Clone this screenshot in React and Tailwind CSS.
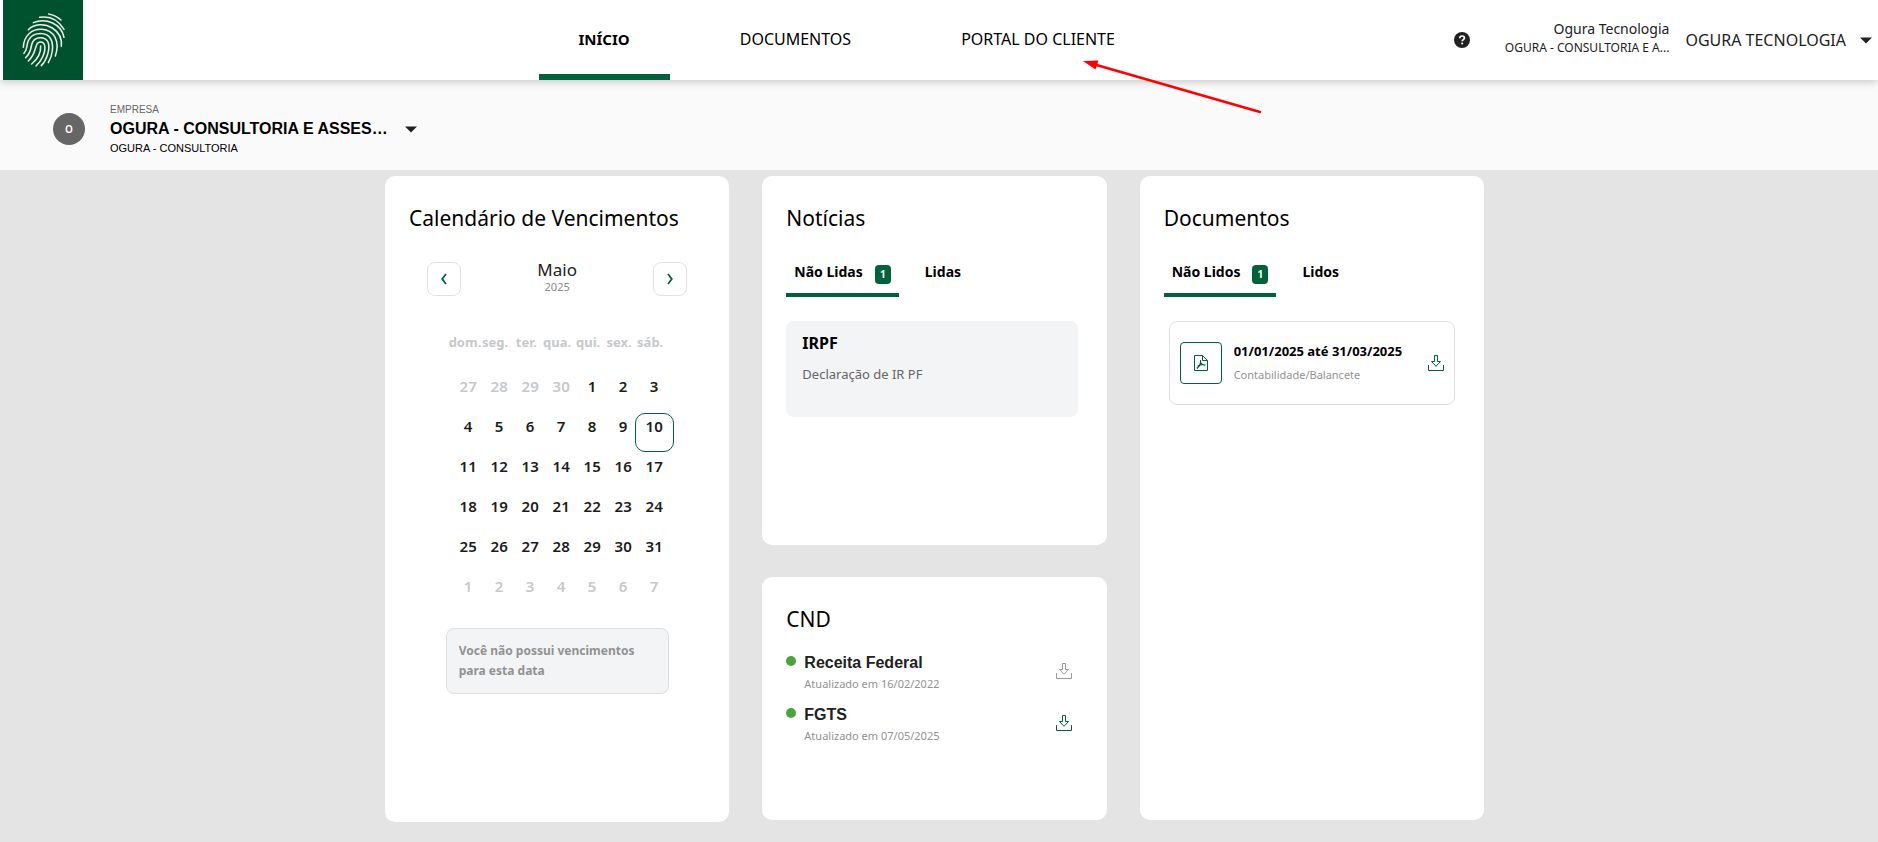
import React from "react";

const WEEKDAYS = ["dom.", "seg.", "ter.", "qua.", "qui.", "sex.", "sáb."];
const WEEKS = [
  [27, 28, 29, 30, 1, 2, 3],
  [4, 5, 6, 7, 8, 9, 10],
  [11, 12, 13, 14, 15, 16, 17],
  [18, 19, 20, 21, 22, 23, 24],
  [25, 26, 27, 28, 29, 30, 31],
  [1, 2, 3, 4, 5, 6, 7],
];

function isOutside(week, day) {
  return (week === 0 && day > 20) || (week === 5 && day < 20);
}

function Fingerprint() {
  return (
    <svg viewBox="9 0 240 240" className="size-20" fill="none" stroke="#e9f0ea" strokeWidth="4.6" strokeLinecap="round" aria-hidden="true">
      <path d="M146 42Q167 46 183 60" />
      <path d="M119 52C150 47 176 61 192 88" />
      <path d="M100 68C138 52 185 72 192 112" />
      <path d="M85 89C102 71 133 69 157 84C177 97 187 114 184 139" />
      <path d="M70 142C71 107 96 86 126 88C162 91 181 123 166 168" />
      <path d="M72 160C85 146 78 131 87 118C102 95 141 95 153 118C162 138 157 168 145 188" />
      <path d="M77 173C97 155 91 138 98 126C107 109 136 109 144 126C152 148 139 182 124 197" />
      <path d="M85 183C104 165 104 150 109 137C114 122 131 123 134 137C138 156 124 184 108 198" />
      <path d="M122 138C123 158 112 178 95 192" />
    </svg>
  );
}

function Caret() {
  return (
    <svg viewBox="0 0 12 7" className="h-[7px] w-3 shrink-0" fill="#212121" aria-hidden="true">
      <path d="M0 .5h12L6 6.5z" />
    </svg>
  );
}

function DownloadIcon() {
  return (
    <svg viewBox="0 0 16 16" className="size-4" fill="none" stroke="currentColor" aria-hidden="true">
      <path d="M6.5.5h3v6h3L8 11.3 3.5 6.5h3z" />
      <path d="M.5 10v5.5h15V10" />
    </svg>
  );
}

function PdfIcon() {
  return (
    <svg viewBox="0 0 14 16" className="h-4 w-[14px]" fill="none" stroke="currentColor" aria-hidden="true">
      <path d="M.5.5h8l5 5v10H.5z" />
      <path d="M8.5.5v5h5" />
      <path d="M6.500 5C7 8 6 11 2.800 13.500M3.500 11.200C5.500 9.800 8.500 9.300 11.500 10M6.600 7.500C7.500 9 9 10 11 10.300" strokeWidth="1.200" />
    </svg>
  );
}

function Chevron({ d }) {
  return (
    <svg viewBox="0 0 8 12" className="h-3 w-2" fill="none" stroke="#00623a" strokeWidth="1.8" aria-hidden="true">
      <path d={d} />
    </svg>
  );
}

function Card({ title, className = "", children }) {
  return (
    <section className={"rounded-[10px] bg-white px-6 pt-6 " + className}>
      <h2 className="text-[21px] leading-9 text-black">{title}</h2>
      {children}
    </section>
  );
}

function Tabs({ active, other }) {
  return (
    <div role="tablist" className="mt-6 flex h-[37px] gap-[18px] text-sm leading-6 font-bold text-black">
      <button role="tab" aria-selected="true" className="flex items-start gap-3 border-b-4 border-[#00623a] px-2">
        {active}
        <span className="mt-[5px] h-[19px] w-4 rounded bg-[#00623a] text-center text-[10px] leading-[19px] text-white">1</span>
      </button>
      <button role="tab" aria-selected="false" className="flex items-start px-2">
        {other}
      </button>
    </div>
  );
}

function Calendar() {
  return (
    <Card title="Calendário de Vencimentos" className="h-[646px]">
      <div className="mt-5 flex items-center justify-between px-[18px]">
        <button aria-label="Mês anterior" className="mt-[6px] flex size-[34px] items-center justify-center rounded-lg border border-[#e2e2e2]">
          <Chevron d="M6 1 2.200 6 6 11" />
        </button>
        <div className="text-center">
          <p className="text-[17px] leading-[22px] text-[#212121]">Maio</p>
          <p className="text-[11px] leading-3 text-[#8a8a8a]">2025</p>
        </div>
        <button aria-label="Próximo mês" className="mt-[6px] flex size-[34px] items-center justify-center rounded-lg border border-[#e2e2e2]">
          <Chevron d="M2 1 5.800 6 2 11" />
        </button>
      </div>
      <table className="mx-auto mt-7 w-[217px] table-fixed border-collapse">
        <thead>
          <tr className="h-12">
            {WEEKDAYS.map((d) => (
              <th key={d} className="p-0 pb-3 text-center text-[13px] leading-5 font-bold whitespace-nowrap text-[#c6c8ca]">
                {d}
              </th>
            ))}
          </tr>
        </thead>
        <tbody>
          {WEEKS.map((week, w) => (
            <tr key={w} className="h-10">
              {week.map((day) => {
                const today = w === 1 && day === 10;
                const color = isOutside(w, day) ? "text-[#c6c8ca]" : "text-[#1b1b1b]";
                return (
                  <td key={day} className="p-0 pl-2">
                    <button
                      className={
                        "-mx-2 flex size-[39px] items-start justify-center rounded-[10px] border pt-[2px] text-[15px] leading-5 font-semibold " +
                        color +
                        (today ? " border-[#00623a]" : " border-transparent")
                      }
                    >
                      {day}
                    </button>
                  </td>
                );
              })}
            </tr>
          ))}
        </tbody>
      </table>
      <p className="mx-auto mt-4 w-[223px] rounded-lg border border-[#dfdfdf] bg-[#f3f4f6] px-3 py-3 text-xs leading-5 font-bold text-[#929292]">
        Você não possui vencimentos para esta data
      </p>
    </Card>
  );
}

function CndItem({ name, date, tone }) {
  return (
    <li className="flex h-[52px] items-start">
      <span className="mt-[5px] mr-2 size-[10px] rounded-full bg-[#4aa53a]" />
      <div className="flex-1">
        <p className="font-['Liberation_Sans',sans-serif] text-base leading-6 font-bold text-[#212121]">{name}</p>
        <p className="text-[11px] leading-[18px] text-[#929292]">Atualizado em {date}</p>
      </div>
      <button aria-label={"Baixar " + name} className={"mt-3 mr-[11px] " + tone}>
        <DownloadIcon />
      </button>
    </li>
  );
}

export default function App() {
  return (
    <div className="min-h-screen bg-[#e4e4e4] font-['Noto_Sans',sans-serif] text-[#212121]">
      <header className="relative z-10 flex h-20 items-stretch bg-white pr-[6px] pl-[3px] shadow-[0_2px_8px_rgba(0,0,0,0.2)]">
        <a href="#inicio" aria-label="Página inicial" className="size-20 shrink-0 bg-[#00522e]">
          <Fingerprint />
        </a>
        <nav className="flex flex-1 justify-center gap-[30px] pl-[156px] text-base text-black">
          <a href="#inicio" className="flex items-center border-b-6 border-[#00623a] px-10 pt-1 text-[15px] font-bold">INÍCIO</a>
          <a href="#documentos" className="flex items-center px-10 pb-[2px]">DOCUMENTOS</a>
          <a href="#portal" className="flex items-center px-10 pb-[2px]">PORTAL DO CLIENTE</a>
        </nav>
        <div className="flex shrink-0 items-center">
          <button aria-label="Ajuda">
            <svg viewBox="0 0 16 16" className="size-4" aria-hidden="true">
              <circle cx="8" cy="8" r="8" fill="#212121" />
              <path d="M5.700 6.200C5.800 4.700 6.800 4 8.100 4s2.300.8 2.300 2c0 1.600-2.200 1.700-2.200 3.200" fill="none" stroke="#fff" strokeWidth="1.700" />
              <circle cx="8.200" cy="11.500" r="1.100" fill="#fff" />
            </svg>
          </button>
          <div className="w-[199px] pb-1 text-right">
            <p className="text-sm leading-5">Ogura Tecnologia</p>
            <p className="ml-[29px] text-xs leading-[18px] whitespace-nowrap">OGURA - CONSULTORIA E A...</p>
          </div>
          <button className="ml-4 flex items-center gap-[14px] text-base">
            OGURA TECNOLOGIA
            <Caret />
          </button>
        </div>
        <svg viewBox="0 0 180 54" className="pointer-events-none absolute top-[60px] left-[1083px] h-[54px] w-[180px]" aria-hidden="true">
          <path d="M10 4 177 52" stroke="#ff0000" strokeWidth="2.500" strokeLinecap="round" />
          <path d="M0 1 15.500 .5 12.500 9.500z" fill="#ff0000" />
        </svg>
      </header>

      <div className="flex h-[90px] items-center bg-[#fafafa] pt-2 pl-[53px] font-['Liberation_Sans',sans-serif]">
        <span className="flex size-8 items-center justify-center rounded-full bg-[#666666] font-['Noto_Sans',sans-serif] text-[10px] font-semibold text-white">O</span>
        <button className="ml-[25px] flex items-center gap-[17px] text-left">
          <span className="flex flex-col">
            <span className="text-[10px] leading-4 text-[#666666]">EMPRESA</span>
            <span className="text-base leading-[22px] font-bold text-black">OGURA - CONSULTORIA E ASSES…</span>
            <span className="text-[11px] leading-4 text-black">OGURA - CONSULTORIA</span>
          </span>
          <Caret />
        </button>
      </div>

      <main className="mt-[6px] pr-[9px] pb-5">
        <div className="mx-auto grid max-w-[1099px] grid-cols-3 items-start gap-[33px]">
          <Calendar />
          <div className="flex flex-col gap-8">
            <Card title="Notícias" className="h-[369px]">
              <Tabs active="Não Lidas" other="Lidas" />
              <article className="mt-6 mr-[5px] h-24 rounded-lg bg-[#f3f4f6] px-4 pt-[10px]">
                <h3 className="text-base leading-6 font-bold text-black">IRPF</h3>
                <p className="mt-[7px] text-[13px] leading-6 text-[#666666]">Declaração de IR PF</p>
              </article>
            </Card>
            <Card title="CND" className="h-[243px]">
              <ul className="mt-[14px]">
                <CndItem name="Receita Federal" date="16/02/2022" tone="text-[#9a9a9a]" />
                <CndItem name="FGTS" date="07/05/2025" tone="text-[#00623a]" />
              </ul>
            </Card>
          </div>
          <Card title="Documentos" className="h-[644px]">
            <Tabs active="Não Lidos" other="Lidos" />
            <article className="mx-[5px] mt-6 flex h-[84px] items-center rounded-lg border border-[#dfdfdf] px-[10px]">
              <span className="flex size-[42px] shrink-0 items-center justify-center rounded border border-[#00623a] text-[#00623a]">
                <PdfIcon />
              </span>
              <div className="ml-3 flex-1 whitespace-nowrap">
                <h3 className="text-[13px] leading-6 font-bold text-black">01/01/2025 até 31/03/2025</h3>
                <p className="text-[11px] leading-6 text-[#929292]">Contabilidade/Balancete</p>
              </div>
              <button aria-label="Baixar documento" className="text-[#00623a]">
                <DownloadIcon />
              </button>
            </article>
          </Card>
        </div>
      </main>
    </div>
  );
}
